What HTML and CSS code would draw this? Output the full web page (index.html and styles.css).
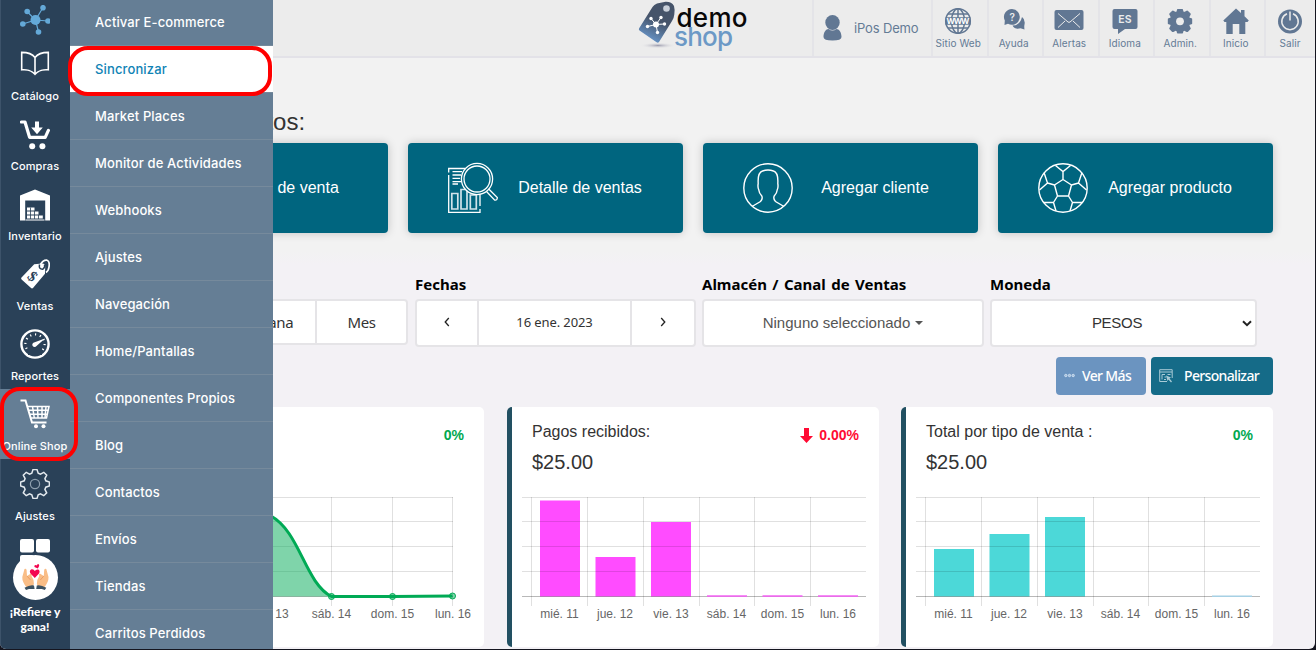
FILE: index.html
```html
<!DOCTYPE html>
<html lang="es">
<head>
  <meta charset="UTF-8" />
  <meta name="viewport" content="width=device-width, initial-scale=1.0"/>
  <title>Demo Shop</title>
  <link rel="stylesheet" href="styles.css">
</head>
<body>
  <svg class="defs" width="0" height="0">
    <symbol id="gear" viewBox="-15 -15 30 30">
      <path d="M-3.2-10.8L-2-14.4H2L3.2-10.8L5.4-9.9L8.8-11.7L11.7-8.8L9.9-5.4L10.8-3.2L14.4-2V2L10.8 3.2L9.9 5.4L11.7 8.8L8.8 11.7L5.4 9.9L3.2 10.8L2 14.4H-2L-3.2 10.8L-5.4 9.9L-8.8 11.7L-11.7 8.8L-9.9 5.4L-10.8 3.2L-14.4 2V-2L-10.8-3.2L-9.9-5.4L-11.7-8.8L-8.8-11.7L-5.4-9.9Z"/>
    </symbol>
    <symbol id="grid" viewBox="0 0 366 150">
      <path d="M10 17.5H354M10 41.5H354M10 66.5H354M10 91.5H354M19.5 17V126M75.5 17V126M131.5 17V126M187.5 17V126M242.5 17V126M298.5 17V126" stroke="rgba(0,0,0,.12)" fill="none"/>
      <path d="M10 116.5H354" stroke="rgba(0,0,0,.28)"/>
    </symbol>
  </svg>

  <div class="window">
    <nav class="sidebar">
      <div class="side-top">
        <svg width="30" height="30" viewBox="0 0 30 30" fill="#64a9d8" stroke="#64a9d8">
          <path d="M15.5 15L23 2.5M15.5 15L7 6.5M15.5 15L2.7 19M15.5 15L18.5 27M15.5 15L28 16" stroke-width="1.2"/>
          <g stroke="none"><circle cx="15.5" cy="15" r="5"/><circle cx="23" cy="2.7" r="2.8"/><circle cx="7.2" cy="6.5" r="2.8"/><circle cx="2.8" cy="19" r="2.8"/><circle cx="18.5" cy="27" r="2.8"/><circle cx="28" cy="16" r="2.8"/></g>
        </svg>
      </div>
      <a class="side-item">
        <svg width="30" height="30" viewBox="0 0 30 30" fill="none" stroke="#fff" stroke-width="1.6">
          <path d="M15 8.5C12 4.5 6 3.4 1.7 3.4V20.8C6 20.3 12 21.5 15 25.2C18 21.5 24 20.3 28.3 20.8V3.4C24 3.4 18 4.5 15 8.5V25"/>
        </svg>
        <span>Catálogo</span>
      </a>
      <a class="side-item">
        <svg width="30" height="32" viewBox="0 0 30 32" fill="#fff">
          <path d="M1.500 3H5L9.600 18.300H25.200L28.400 11.400" fill="none" stroke="#fff" stroke-width="3.200" stroke-linecap="round" stroke-linejoin="round"/>
          <path d="M15 2.500H19V8.500H22.800L17 15.300L11.200 8.500H15Z"/>
          <circle cx="12.200" cy="27.200" r="3"/><circle cx="22.400" cy="27.200" r="3"/>
        </svg>
        <span>Compras</span>
      </a>
      <a class="side-item">
        <svg width="30" height="32" viewBox="0 0 30 32" fill="#fff">
          <path d="M0 6.600L15 .4L30 6.600V31.500H25.200V11.500H5.200V31.500H0Z"/>
          <path d="M7 20H14.500M7 24H18.500M7 28H22.800" stroke="#fff" stroke-width="3"/>
          <path d="M10.500 18.500V30M14.500 22V30M18.500 26V30" stroke="#2a4158" stroke-width=".8"/>
          <path d="M5.500 31H24.500" stroke="#fff" stroke-width="1"/>
        </svg>
        <span>Inventario</span>
      </a>
      <a class="side-item">
        <svg width="30" height="30" viewBox="0 0 30 30">
          <path d="M1.300 18.800L14.200 5.200L22.200 4.600Q25.400 4.600 25.200 8L25 14.800L13 29Q12 30 10.800 28.800L1.600 20.400Q.8 19.600 1.300 18.800Z" fill="#fff"/>
          <path d="M22 10.500Q18 10 20.500 5.500Q23 .8 27 1.200Q30 2 29 8Q28.500 12 26 13.500" fill="none" stroke="#fff" stroke-width="1.700"/>
          <path d="M19.500 5.500Q18.500 10.500 22.800 10.300Q25.500 8 24.500 5.500" fill="none" stroke="#2a4158" stroke-width="1.500"/>
          <text class="tag-sign" x="13" y="22.500" transform="rotate(42 13 17)">$</text>
        </svg>
        <span>Ventas</span>
      </a>
      <a class="side-item">
        <svg width="30" height="30" viewBox="0 0 30 30">
          <circle cx="15" cy="15" r="13.600" fill="none" stroke="#fff" stroke-width="2.400"/>
          <circle cx="15" cy="15" r="9.600" fill="none" stroke="#fff" stroke-width="2.200" stroke-dasharray="1.200 3.800" pathLength="60"/>
          <path d="M8 20H22V26H8Z" fill="#2a4158"/>
          <path d="M25 9.500L16.500 17A2.300 2.300 0 1 1 14 13.500Z" fill="#fff"/>
        </svg>
        <span>Reportes</span>
      </a>
      <a class="side-item active">
        <svg width="30" height="30" viewBox="0 0 30 30" fill="none" stroke="#fff">
          <path d="M.5 1.500H5.500L12 23.500H26.500" stroke-width="2"/>
          <path d="M7 7.500H29L26.500 19H10.500M8 11.300H28M9 15.200H27M12.500 7.500L14.300 19M17.500 7.500L18 19M22 7.500V19M26 7.500L25 19" stroke-width="1.500"/>
          <circle cx="16" cy="27.300" r="2" fill="#fff" stroke="none"/><circle cx="23.500" cy="27.300" r="2" fill="#fff" stroke="none"/>
        </svg>
        <span>Online Shop</span>
      </a>
      <a class="side-item">
        <svg width="30" height="30" viewBox="0 0 30 30" fill="none" stroke="#e3e9ee">
          <use href="#gear" width="30" height="30" stroke-width="1.500"/>
          <circle cx="15" cy="15" r="4.600" stroke="#8fa0af" stroke-width="1.200"/>
        </svg>
        <span>Ajustes</span>
      </a>
      <a class="refer">
        <svg width="70" height="72" viewBox="0 0 70 72">
          <g fill="#fff"><rect x="20" y="10" width="14" height="13.500" rx="2"/><rect x="36" y="10" width="14" height="13.500" rx="2"/><rect x="20" y="26" width="14" height="13.500" rx="2"/>
          <circle cx="35.500" cy="48.500" r="22.500"/></g>
          <g id="hand">
            <path d="M24.500 40Q26 39 26.600 41L27 47L31 44.500Q32.500 45 31.500 47L33.500 51Q34.500 55 33 57L27 59Q22 53 22.300 48Z" fill="#f9bd86"/>
            <path d="M27 47L30.500 51" stroke="#e8955a" stroke-width=".8"/>
            <path d="M24.500 58.800Q30 55.500 34 56.500L34.600 60H29L26 61Z" fill="#3d5261"/>
          </g>
          <use href="#hand" transform="translate(70.800 0) scale(-1 1)"/>
          <path d="M34.800 49L30.300 44.200Q29 41.500 31.500 40.300Q34 40 34.800 42Q36 40 38.300 40.500Q40.500 42 39 44.500Z" fill="#f30650"/>
          <path d="M37.800 39.500L34.500 38Q33.800 36.500 35.300 36Q36.300 36 36.700 36.600Q36.800 35 38.500 35Q39.800 36 38.800 37.800Z" fill="#f30650"/>
        </svg>
        <b>¡Refiere y<br>gana!</b>
      </a>
    </nav>

    <ul class="submenu">
      <li>Activar E-commerce</li>
      <li class="selected">Sincronizar</li>
      <li>Market Places</li>
      <li>Monitor de Actividades</li>
      <li>Webhooks</li>
      <li>Ajustes</li>
      <li>Navegación</li>
      <li>Home/Pantallas</li>
      <li>Componentes Propios</li>
      <li>Blog</li>
      <li>Contactos</li>
      <li>Envíos</li>
      <li>Tiendas</li>
      <li>Carritos Perdidos</li>
    </ul>

    <div class="page">
      <header class="topbar">
        <svg class="logo" width="115" height="56" viewBox="0 0 115 56">
          <defs>
            <linearGradient id="tagFill" x1=".7" y1="0" x2=".3" y2="1"><stop offset=".45" stop-color="#46546a"/><stop offset="1" stop-color="#6a9ad0"/></linearGradient>
            <radialGradient id="tagShade"><stop offset="0" stop-color="#9c9cae"/><stop offset="1" stop-color="#ececec" stop-opacity="0"/></radialGradient>
          </defs>
          <ellipse cx="20" cy="45.500" rx="18" ry="3" fill="url(#tagShade)"/>
          <path d="M1 28.500L14.500 7Q16 4.500 19 3.500L27.500 1.800Q33.500 1.500 36 6Q37 9 36.300 14.500Q36 18 34 21L21 42Q20 43.300 18.600 42.300L1.500 30.500Q.5 29.600 1 28.500Z" fill="url(#tagFill)"/>
          <circle cx="28.500" cy="8.500" r="3.300" fill="#c9d0da"/>
          <g stroke="#fff" fill="#fff"><path d="M18 24.500L23 17.500M18 24.500L13 18.500M18 24.500L9.500 26.500M18 24.500L19.500 32.500M18 24.500L26 24"/>
          <g stroke="none"><circle cx="18" cy="24.500" r="3"/><circle cx="23" cy="17.500" r="1.700"/><circle cx="13" cy="18.500" r="1.700"/><circle cx="9.500" cy="26.500" r="1.700"/><circle cx="19.500" cy="32.500" r="1.700"/><circle cx="26.500" cy="24" r="1.700"/></g></g>
          <text class="logo-text" x="38.500" y="26.500" fill="#080808" textLength="71">demo</text>
          <text class="logo-text" x="36" y="46" fill="#6c99c6" textLength="59">shop</text>
        </svg>
        <a class="user">
          <svg width="19" height="26" viewBox="0 0 19 26" fill="#617793"><ellipse cx="9.500" cy="7.500" rx="7.200" ry="7.400"/><path d="M.5 22C.5 17 3 14 5.500 14Q9.500 17 13.500 14C16 14 18.500 17 18.500 22Q18.500 25.500 9.500 25.500Q.5 25.500 .5 22Z"/></svg>
          iPos Demo
        </a>
        <a class="tool">
          <svg width="28" height="28" viewBox="0 0 28 28" fill="none" stroke="#617793" stroke-width="1.500">
            <circle cx="14" cy="14" r="12.300"/><ellipse cx="14" cy="14" rx="6.500" ry="12.300"/><path d="M14 1.500V26.500M4 7H24M4 21H24"/>
            <path d="M1.500 14H26.500" stroke-width="7.500"/>
            <text class="www" x="14" y="17" textLength="23">WWW</text>
          </svg>
          <span>Sitio Web</span>
        </a>
        <a class="tool">
          <svg width="28" height="28" viewBox="0 0 28 28" fill="#617793">
            <path d="M22 10Q25.500 12.500 24.500 17.500Q24 19 24.500 22.500L20.500 21.300Q15 23 12.500 18.500Q20 18.500 22 10Z"/>
            <path d="M12 2A7.900 7.900 0 1 1 8 16.800L4.500 18L4.800 13.500A7.900 7.900 0 0 1 12 2Z"/>
            <text class="glyph" x="12.200" y="14" font-size="10">?</text>
          </svg>
          <span>Ayuda</span>
        </a>
        <a class="tool">
          <svg width="30" height="28" viewBox="0 0 30 28">
            <rect x=".5" y="3" width="29" height="20" rx="2" fill="#617793"/>
            <path d="M4 6.500L14 15Q15 15.700 16 15L26 6.500M4 20.500L11 14M26 20.500L19 14" fill="none" stroke="#ececec" stroke-width="1"/>
          </svg>
          <span>Alertas</span>
        </a>
        <a class="tool">
          <svg width="28" height="28" viewBox="0 0 28 28">
            <path d="M3.500 2H24.500Q26.500 2 26.500 4V20Q26.500 22 24.500 22H14L7 27V22H3.500Q1.500 22 1.500 20V4Q1.500 2 3.500 2Z" fill="#617793"/>
            <text class="glyph" x="14" y="15.800" font-size="10.500">ES</text>
          </svg>
          <span>Idioma</span>
        </a>
        <a class="tool">
          <svg width="28" height="28" viewBox="0 0 28 28">
            <g fill="#617793" stroke="#617793" stroke-width="3" stroke-linejoin="round"><use href="#gear" x="1.800" y="2.100" width="24.400" height="24.400"/></g>
            <circle cx="14" cy="14.300" r="3.900" fill="#ececec"/>
          </svg>
          <span>Admin.</span>
        </a>
        <a class="tool">
          <svg width="28" height="28" viewBox="0 0 28 28" fill="#617793"><path d="M14 1.500L19 6V3H22.500V9.300L26.800 13.500L25.500 15H23.300V27H17.300V17H10.700V27H4.300V15H2.500L1.300 13.500Z"/></svg>
          <span>Inicio</span>
        </a>
        <a class="tool last">
          <svg width="28" height="28" viewBox="0 0 28 28"><circle cx="14" cy="14.500" r="12" fill="#617793"/><path d="M11 6.800A8.200 8.200 0 1 0 17 6.800M14 4.500V13.500" fill="none" stroke="#ececec" stroke-width="1.500"/></svg>
          <span>Salir</span>
        </a>
      </header>

      <main>
        <h1>Accesos directos:</h1>
        <section class="shortcuts">
          <a class="shortcut"><span class="shortcut-icon"></span><span class="shortcut-text">Punto de venta</span></a>
          <a class="shortcut">
            <svg class="shortcut-icon" width="50" height="52" viewBox="0 0 50 52" fill="none" stroke="#fff" stroke-width="1.300">
              <path d="M17 6.500H.7V10.500M.7 13V50.300H32V47M32 44V33M4.500 9.700H14M4.500 13H13M4.500 16.300H12M4.500 19.600H13M4.500 22H10"/>
              <g stroke="#cfe3ea" stroke-width="1.700"><path d="M3.800 31.500H9.800V47H3.800ZM13 27.500H19V47H13ZM22.300 33H28.300V47H22.300Z"/></g>
              <circle cx="29" cy="17" r="15.600" fill="#00657f"/><circle cx="29" cy="17" r="13"/>
              <path d="M38.500 29.500L46.500 38Q49.500 38.500 49.300 35.500L41 27.300"/>
            </svg>
            <span class="shortcut-text">Detalle de ventas</span>
          </a>
          <a class="shortcut">
            <svg class="shortcut-icon" width="50" height="52" viewBox="0 0 50 52" fill="none" stroke="#fff" stroke-width="1.400">
              <circle cx="25" cy="26" r="24.200"/>
              <path d="M9 44.500L17.500 39.500Q20 37 18.800 34Q16 31 15.800 28Q14.500 25 15.200 21.500Q14.500 10.500 19.500 9Q25 7 30.500 9Q35.500 10.500 34.800 21.500Q35.500 25 34.200 28Q34 31 31.200 34Q30 37 32.500 39.500L41 44.500"/>
            </svg>
            <span class="shortcut-text">Agregar cliente</span>
          </a>
          <a class="shortcut">
            <svg class="shortcut-icon" width="50" height="52" viewBox="0 0 50 52" fill="none" stroke="#fff" stroke-width="1.400">
              <circle cx="25" cy="26" r="24.200"/>
              <path d="M25 17.500L33.500 23L30.500 34H19.500L16.500 23ZM25 17.500V9.500M17.500 3.500L25 9.500L32.500 3.500M16.500 23L9.500 21M6 10.500L9.500 21L1.500 28M33.500 23L40.500 21M44 10.500L40.500 21L48.500 28M19.500 34L15.500 40.500L18 49M15.500 40.500H5.500M30.500 34L34.500 40.500L32 49M34.500 40.500H44.500"/>
            </svg>
            <span class="shortcut-text">Agregar producto</span>
          </a>
        </section>

        <section class="filters">
          <div class="filter period">
            <label>&nbsp;</label>
            <div class="group"><span class="cell week">Semana</span><span class="cell month">Mes</span></div>
          </div>
          <div class="filter dates">
            <label>Fechas</label>
            <div class="group">
              <span class="cell prev"><svg width="8" height="10" viewBox="0 0 8 10"><path d="M5.800 1L2.200 5L5.800 9"/></svg></span>
              <span class="cell date">16 ene. 2023</span>
              <span class="cell next"><svg width="8" height="10" viewBox="0 0 8 10"><path d="M2.200 1L5.800 5L2.200 9"/></svg></span>
            </div>
          </div>
          <div class="filter store">
            <label>Almacén / Canal de Ventas</label>
            <div class="group"><span class="cell">Ninguno seleccionado<i class="caret"></i></span></div>
          </div>
          <div class="filter currency">
            <label>Moneda</label>
            <div class="group"><span class="cell">PESOS</span><svg width="10" height="7" viewBox="0 0 10 7"><path d="M1 1.200L5 5.200L9 1.200"/></svg></div>
          </div>
        </section>

        <div class="actions">
          <button class="btn more">
            <svg width="11" height="5" viewBox="0 0 11 5" fill="#9dbddf" stroke="#dbe7f3" stroke-width=".8"><circle cx="1.800" cy="2.500" r="1.200"/><circle cx="5.500" cy="2.500" r="1.200"/><circle cx="9.200" cy="2.500" r="1.200"/></svg>
            Ver Más
          </button>
          <button class="btn custom">
            <svg width="14" height="14" viewBox="0 0 14 14" fill="none" stroke="#a9cbd6" stroke-width="1"><path d="M13.200 9V.7H.7V12.500H8M.7 3H13M3 5.500H6M3 5.500V10.500M5.500 8H7M5 10.500H7M8.500 5.500H11.500"/><path d="M7 6.500L12 8.500L10.500 9.500L13 12.500L12 13.500L9.500 10.500L8.500 12Z" fill="#a9cbd6" stroke="none"/></svg>
            Personalizar
          </button>
        </div>

        <section class="cards">
          <article class="card">
            <div class="card-head"><span class="change up">0%</span></div>
            <svg class="chart" width="366" height="150" viewBox="0 0 366 150">
              <path d="M10 17.500H335M10 41.500H335M10 66.500H335M10 91.500H335M153.500 17V126M213.500 17V126M274.500 17V126M334.500 17V126" stroke="rgba(0,0,0,.12)" fill="none"/>
              <path d="M10 116.500H335" stroke="rgba(0,0,0,.28)"/>
              <path d="M92 116V60Q120 22 153 36C182 52 187 103 213.500 116.500L274.500 116.500L334.500 116V116.500H92Z" fill="rgba(0,170,85,.5)"/>
              <path d="M153 36C182 52 187 103 213.500 116.500L274.500 116.500L334.500 116" fill="none" stroke="#00aa55" stroke-width="3"/>
              <g fill="rgba(0,170,85,.5)" stroke="#00aa55"><circle cx="213.500" cy="116.500" r="3"/><circle cx="274.500" cy="116.500" r="3"/><circle cx="334.500" cy="116" r="3"/></g>
              <g class="axis"><text x="153" y="138">vie. 13</text><text x="213.500" y="138">sáb. 14</text><text x="274.500" y="138">dom. 15</text><text x="335" y="138">lun. 16</text></g>
            </svg>
          </article>
          <article class="card">
            <div class="card-head">
              <div><h2>Pagos recibidos:</h2><p>$25.00</p></div>
              <span class="change down"><svg width="13" height="15" viewBox="0 0 13 15"><path d="M4 0H9V8H13L6.500 15L0 8H4Z" fill="#ff0a33"/></svg>0.00%</span>
            </div>
            <svg class="chart" width="366" height="150" viewBox="0 0 366 150">
              <g fill="rgba(255,0,255,.7)">
                <rect x="28" y="20.500" width="40" height="96"/><rect x="83.500" y="77" width="40" height="39.500"/><rect x="139" y="42" width="40" height="74.500"/>
              </g>
              <use href="#grid" width="366" height="150"/>
              <g fill="#f35cf3">
                <rect x="195" y="115.300" width="40" height="1.500"/><rect x="250.500" y="115.300" width="40" height="1.500"/><rect x="306" y="115.300" width="40" height="1.500"/>
              </g>
              <g class="axis"><text x="47.500" y="138">mié. 11</text><text x="103" y="138">jue. 12</text><text x="159" y="138">vie. 13</text><text x="214.500" y="138">sáb. 14</text><text x="270.500" y="138">dom. 15</text><text x="326" y="138">lun. 16</text></g>
            </svg>
          </article>
          <article class="card">
            <div class="card-head">
              <div><h2>Total por tipo de venta :</h2><p>$25.00</p></div>
              <span class="change up">0%</span>
            </div>
            <svg class="chart" width="366" height="150" viewBox="0 0 366 150">
              <g fill="rgba(0,199,199,.7)">
                <rect x="28" y="69" width="40" height="47.500"/><rect x="83.500" y="54" width="40" height="62.500"/><rect x="139" y="37" width="40" height="79.500"/>
              </g>
              <use href="#grid" width="366" height="150"/>
              <rect x="306" y="115.500" width="40" height="1.500" fill="#a6d0e4"/>
              <g class="axis"><text x="47.500" y="138">mié. 11</text><text x="103" y="138">jue. 12</text><text x="159" y="138">vie. 13</text><text x="214.500" y="138">sáb. 14</text><text x="270.500" y="138">dom. 15</text><text x="326" y="138">lun. 16</text></g>
            </svg>
          </article>
        </section>
      </main>
    </div>

    <div class="mark mark-sync"></div>
    <div class="mark mark-shop"></div>
  </div>
</body>
</html>
```
FILE: styles.css
```css
* {
  box-sizing: border-box;
}

body {
  margin: 0;
  height: 650px;
  overflow: hidden;
  background: #15151f;
  font-family: "Liberation Sans", Arial, sans-serif;
  color: #333;
}

.defs {
  display: none;
}

.window {
  position: relative;
  display: flex;
  width: 1315px;
  height: 649px;
  overflow: hidden;
  border-radius: 0 0 6px 6px;
  background: linear-gradient(#f2f2f2 250px, #f3f1f5 265px);
}

/* sidebar */
.sidebar {
  display: flex;
  flex-direction: column;
  width: 70px;
  height: 649px;
  flex-shrink: 0;
  background: #2a4158;
  box-shadow: inset 1px 0 #3d536a;
  font-family: Inter, sans-serif;
  color: #fff;
}

.side-top {
  height: 39px;
  padding: 5px 0 0 20px;
  flex-shrink: 0;
}

.side-item {
  display: flex;
  flex-direction: column;
  align-items: center;
  justify-content: space-between;
  height: 70px;
  flex-shrink: 0;
  padding: 10px 0 6px;
  font-size: 11px;
  line-height: 14px;
  font-weight: 500;
  letter-spacing: 0.1px;
  white-space: nowrap;
}

.side-item.active {
  background: #657e95;
}

.tag-sign {
  font: bold 15px "Liberation Serif", serif;
  fill: #2a4158;
  text-anchor: middle;
}

.refer {
  display: flex;
  flex-direction: column;
  font-family: Lato, sans-serif;
  font-size: 12px;
  line-height: 15px;
  text-align: center;
}

.refer b {
  font-weight: 900;
  margin-top: 3px;
}

/* flyout menu */
.submenu {
  position: absolute;
  left: 70px;
  top: -1px;
  z-index: 2;
  width: 203px;
  height: 650px;
  margin: 0;
  padding: 0;
  overflow: hidden;
  list-style: none;
  background: #657e95;
  font-family: Inter, sans-serif;
  font-size: 13px;
  font-weight: 500;
  letter-spacing: 0.13px;
  color: #fff;
}

.submenu li {
  height: 47px;
  padding-left: 25px;
  line-height: 47px;
  border-bottom: 1px solid #768a9c;
}

.submenu .selected {
  background: #fff;
  color: #0f83b5;
}

/* top bar */
.page {
  flex: 1;
}

.topbar {
  display: flex;
  justify-content: flex-end;
  height: 58px;
  background: #ececec;
  border-bottom: 2px solid #e3e2e8;
  font-family: Inter, sans-serif;
  color: #647b95;
}

.logo {
  margin-right: 59px;
}

.logo-text {
  font: 500 26px Inter, sans-serif;
}

.user {
  display: flex;
  align-items: center;
  gap: 12px;
  width: 119px;
  padding: 0 0 1px 9px;
  border-left: 2px solid #e4e4e8;
  font-size: 13px;
  letter-spacing: -0.15px;
  white-space: nowrap;
}

.tool {
  display: flex;
  flex-direction: column;
  align-items: center;
  width: 55.5px;
  padding: 7px 3px 0 0;
  border-left: 2px solid #e4e4e8;
  font-size: 10px;
  line-height: 14px;
  letter-spacing: 0.1px;
  white-space: nowrap;
}

.tool span {
  margin-top: 1px;
}

.tool.last {
  width: 51px;
  padding-right: 1px;
}

.www {
  font: bold 8px Inter, sans-serif;
  fill: #fff;
  stroke: none;
  text-anchor: middle;
}

.glyph {
  font-family: Inter, sans-serif;
  font-weight: 600;
  fill: #ececec;
  text-anchor: middle;
}

/* dashboard */
main {
  padding: 47px 42px 0 43px;
}

h1 {
  margin: 0;
  padding-left: 4px;
  font-size: 24px;
  line-height: 34px;
  font-weight: normal;
}

.shortcuts {
  display: grid;
  grid-template-columns: repeat(4, 275px);
  gap: 20px;
  margin-top: 4px;
}

.shortcut {
  display: flex;
  align-items: center;
  height: 90px;
  padding: 0 21px 0 40px;
  border-radius: 4px;
  background: #00657f;
  box-shadow: 0 0 10px rgba(0, 0, 0, 0.2);
  color: #fff;
  font-size: 16px;
}

.shortcut-icon {
  width: 50px;
  flex-shrink: 0;
}

.shortcut-text {
  flex: 1;
  text-align: center;
}

.filters {
  display: grid;
  grid-template-columns: 295px 281px 282px 267px;
  column-gap: 6px;
  margin-top: 41px;
}

.filter label {
  display: block;
  height: 25px;
  line-height: 20px;
  font-family: "Noto Sans", sans-serif;
  font-size: 15px;
  font-weight: bold;
  word-spacing: 1.5px;
  color: #000;
}

.dates {
  margin: 0 -1px 0 1px;
}

.store {
  margin: 0 -1px 0 1px;
}

.currency {
  margin: 0 -1px 0 1px;
}

.group {
  display: flex;
  height: 48px;
  border: 2px solid #e5e4e7;
  border-radius: 4px;
  background: #fff;
}

.cell {
  display: flex;
  align-items: center;
  justify-content: center;
  flex: 1;
  padding-bottom: 2px;
  font-size: 15px;
}

.cell + .cell {
  border-left: 2px solid #e5e4e7;
}

.group path {
  fill: none;
  stroke: #222;
  stroke-width: 1.3;
}

.period .group {
  height: 46px;
  justify-content: flex-end;
}

.period .cell {
  flex: none;
  padding-bottom: 0;
  font-family: "Noto Sans", sans-serif;
  letter-spacing: -0.4px;
}

.week {
  width: 98px;
}

.month {
  width: 91px;
}

.dates .prev {
  flex: 0 0 60px;
}

.dates .next {
  flex: 0 0 64px;
}

.dates .date {
  font-family: "Noto Sans", sans-serif;
  font-size: 13px;
  letter-spacing: -0.1px;
}

.store .cell {
  color: #555;
}

.caret {
  margin: 2px 0 0 5px;
  border: 4px solid transparent;
  border-top-color: #555;
  border-bottom: 0;
}

.currency .group {
  align-items: center;
  padding-right: 3px;
}

.currency .cell {
  letter-spacing: -0.3px;
}

.currency .group path {
  stroke-width: 2;
}

.actions {
  display: flex;
  justify-content: flex-end;
  gap: 5px;
  margin-top: 10px;
}

.btn {
  display: flex;
  align-items: center;
  height: 38px;
  border: 0;
  border-radius: 4px;
  color: #fff;
  font-family: "Noto Sans", sans-serif;
  font-size: 14px;
  font-weight: 500;
  letter-spacing: -0.65px;
  white-space: nowrap;
}

.more {
  width: 90px;
  padding: 0 0 1px 8px;
  gap: 7px;
  background: #6b94c0;
}

.custom {
  width: 122px;
  padding: 0 0 1px 8px;
  gap: 11px;
  background: #156b88;
}

.cards {
  display: grid;
  grid-template-columns: repeat(3, 372px);
  gap: 22px;
  margin-top: 12px;
}

.card {
  height: 240px;
  border-left: 5px solid #225062;
  border-radius: 5px;
  background: #fff;
}

.card:first-child {
  margin-right: 1px;
}

.card-head {
  display: flex;
  justify-content: space-between;
  height: 73px;
  padding: 15px 20px 0;
}

.card-head > :only-child {
  margin-left: auto;
}

.card h2 {
  margin: 0;
  font-size: 16px;
  line-height: 20px;
  font-weight: normal;
}

.card p {
  margin: 8px 0 0;
  font-size: 20px;
  line-height: 24px;
}

.change {
  display: flex;
  align-items: center;
  gap: 6px;
  height: 16px;
  margin-top: 5px;
  font-size: 14px;
  font-weight: bold;
}

.up {
  color: #00a84f;
}

.down {
  color: #ff0a33;
}

.chart {
  display: block;
}

.axis {
  font-size: 12px;
  fill: #666;
  text-anchor: middle;
}

/* highlights */
.mark {
  position: absolute;
  z-index: 3;
  border: 4px solid #f00;
  border-radius: 20px;
}

.mark-sync {
  left: 68px;
  top: 46px;
  width: 204px;
  height: 50px;
}

.mark-shop {
  left: 0;
  top: 387px;
  width: 78px;
  height: 74px;
}
```
